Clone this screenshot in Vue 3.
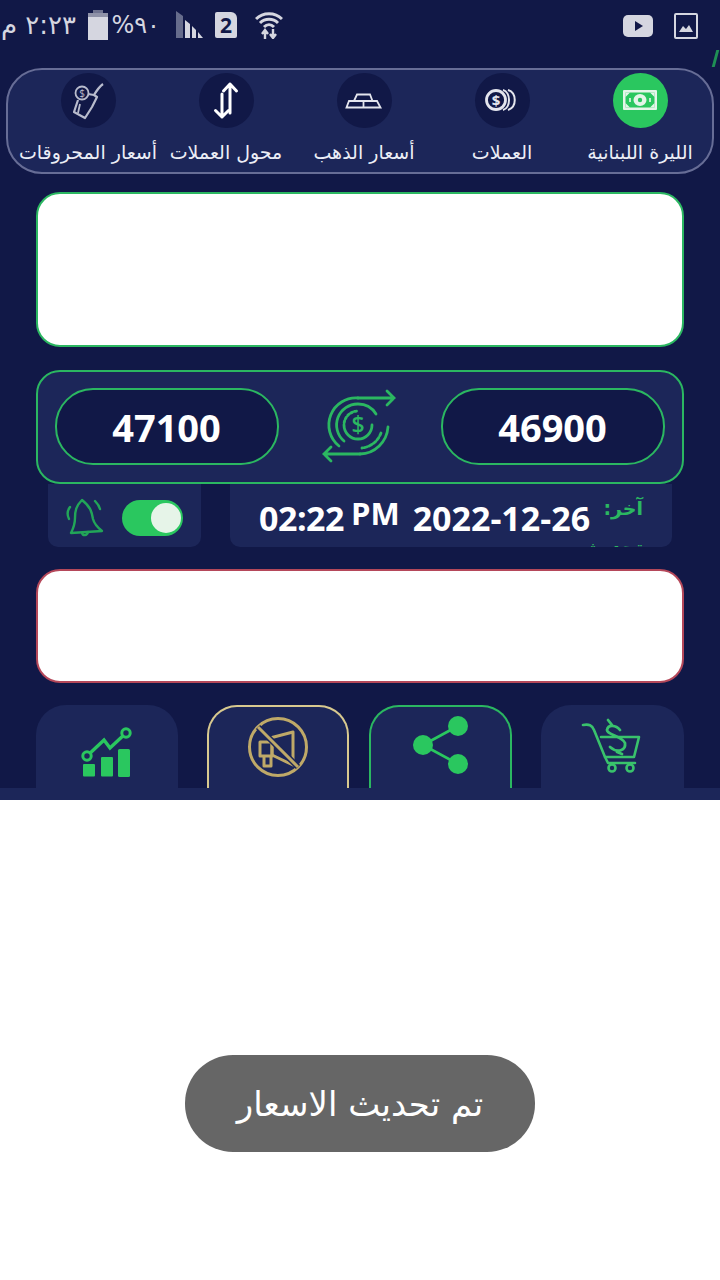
<script setup>
const navItems = [
  { key: 'lira', label: 'الليرة اللبنانية', active: true },
  { key: 'coins', label: 'العملات' },
  { key: 'gold', label: 'أسعار الذهب' },
  { key: 'convert', label: 'محول العملات' },
  { key: 'fuel', label: 'أسعار المحروقات' },
]
</script>

<template>
  <div class="screen">
    <div class="app">
      <header class="status">
        <div class="statusLeft">
          <span class="clock" dir="rtl">٢:٢٣ م</span>
          <svg class="battery" width="20" height="30" viewBox="0 0 20 30">
            <rect x="5" y="0" width="10" height="3" fill="#6f7390" />
            <rect x="0" y="3" width="20" height="4" fill="#8f92a8" />
            <rect x="0" y="7" width="20" height="23" fill="#d5d6e0" />
          </svg>
          <span class="percent" dir="rtl">٩٠%</span>
          <svg class="signal" width="28" height="28" viewBox="0 0 28 28">
            <path d="M0 0 L7 5 V27 H0Z" fill="#666c8c" />
            <path d="M9 9 L14 13 V27 H9Z" fill="#d5d6e0" />
            <path d="M16 15 L20 19 V27 H16Z" fill="#d5d6e0" />
            <path d="M22 21 L27 27 H22Z" fill="#d5d6e0" />
          </svg>
          <div class="sim">2</div>
          <svg class="wifi" width="28" height="28" viewBox="0 0 28 28" fill="none" stroke="#d5d6e0" stroke-width="3">
            <path d="M1 8 C8 1 20 1 27 8" />
            <path d="M5 12 C10 7 18 7 23 12" />
            <path d="M9 16 C12 13 16 13 19 16" />
            <path d="M10 28 V20 M7 23 L10 19 L13 23 M18 18 V26 M15 23 L18 27 L21 23" stroke-width="2.4" />
          </svg>
        </div>
        <div class="statusRight">
          <svg width="30" height="22" viewBox="0 0 30 22">
            <rect width="30" height="22" rx="5" fill="#d5d6e0" />
            <path d="M12 6 L20 11 L12 16Z" fill="#111847" />
          </svg>
          <svg width="24" height="26" viewBox="0 0 24 26">
            <rect x="1" y="1" width="22" height="24" rx="1" fill="none" stroke="#d5d6e0" stroke-width="2" />
            <path d="M5 19 L9 13 L12 16 L15 12 L19 19Z" fill="#d5d6e0" />
          </svg>
        </div>
        <i class="slash"></i>
      </header>

      <nav class="nav" dir="rtl">
        <div v-for="item in navItems" :key="item.key" class="navItem">
          <div class="navCircle" :class="{ active: item.active }">
            <svg v-if="item.key === 'lira'" width="34" height="20" viewBox="0 0 34 20">
              <rect width="34" height="20" rx="1" fill="#e4f5e9" />
              <rect x="2.5" y="2.5" width="29" height="15" fill="#2ac75f" />
              <ellipse cx="17" cy="10" rx="6.5" ry="6" fill="#e4f5e9" />
              <circle cx="17" cy="10" r="2.2" fill="#2ac75f" />
              <path d="M2.5 2.5 H7 L2.5 7Z M31.5 2.5 H27 L31.5 7Z M2.5 17.5 H7 L2.5 13Z M31.5 17.5 H27 L31.5 13Z" fill="#e4f5e9" />
              <path d="M7 8 V12 M27 8 V12" stroke="#e4f5e9" stroke-width="1.6" />
            </svg>
            <svg v-else-if="item.key === 'coins'" width="34" height="24" viewBox="0 0 34 24" fill="none" stroke="#e4e5ee" stroke-width="2">
              <circle cx="11" cy="12" r="9.5" stroke-width="2.8" />
              <path d="M18 2 C26 4 26 20 18 22" />
              <path d="M23 2 C32 5 32 19 23 22" />
              <text x="11" y="17.5" text-anchor="middle" class="coinText">$</text>
            </svg>
            <svg v-else-if="item.key === 'gold'" width="40" height="20" viewBox="345 90 40 20" fill="none" stroke="#e4e5ee" stroke-width="1.8">
              <path d="M355 101 L358 94.5 H371 L373.5 101" />
              <path d="M347.5 107.5 L350 101 H378 L381.5 107.5Z" />
              <path d="M364.5 101 V107.5" />
            </svg>
            <svg v-else-if="item.key === 'convert'" width="40" height="40" viewBox="206 80 40 40" fill="none" stroke="#fff" stroke-width="3" stroke-linecap="round" stroke-linejoin="round">
              <path d="M230 113 V84 M223.5 91 L230 84 L236.5 91" />
              <path d="M222 94 V117 M215.5 110.5 L222 117 L228.5 110.5" />
            </svg>
            <svg v-else width="50" height="50" viewBox="61 75 50 50" fill="none" stroke="#b9bccd" stroke-width="1.8" stroke-linejoin="round">
              <circle cx="80" cy="93" r="6.5" />
              <path d="M76 100 L72 112 L83 118 L90 107 L95 97 L92 95 C95 90 97 87 101 84" stroke-width="2.2" />
              <path d="M86 94 L92 95 M78 104 L76 113" />
              <text x="80" y="96.5" text-anchor="middle" class="fuelText">$</text>
            </svg>
          </div>
          <span class="navLabel">{{ item.label }}</span>
        </div>
      </nav>

      <main class="content">
        <div class="adCard green"></div>

        <section class="priceCard">
          <div class="pill">46900</div>
          <svg class="exchange" width="80" height="80" viewBox="320 386 80 80" fill="none" stroke="#2bb761" stroke-width="2.8" stroke-linecap="round">
            <path d="M358 398 H394 M387 391 L394 398 L387 405" />
            <path d="M360 454 H324 M331 447 L324 454 L331 461" />
            <circle cx="358" cy="425" r="14" stroke-dasharray="44 2 2 2 2 2 2 2 2 2 2" />
            <path d="M344 441 A21 21 0 0 1 358 404 A21 21 0 0 1 376 414" />
            <path d="M339 446 A27 27 0 0 1 358 398" />
            <path d="M388 427 A29 29 0 0 1 360 454" />
            <path d="M381 433 A23 23 0 0 1 362 448" stroke-dasharray="3 2" />
            <text x="358" y="433" text-anchor="middle" class="exchangeText">$</text>
          </svg>
          <div class="pill">47100</div>
        </section>

        <section class="infoRow">
          <div class="alertBox">
            <svg width="40" height="40" viewBox="65 497 40 40" fill="none" stroke="#22a558" stroke-width="2.4" stroke-linejoin="round" stroke-linecap="round">
              <path d="M82 499 C76 505 75 510 75 517 C75 523 73 528 71 532 L102 530 C97 526 94 522 93 518 C92 512 91 506 82 499Z" />
              <path d="M82 532 C83 535 87 535 88 531" />
              <path d="M70 506 C67 510 67 514 69 518 M95 500 C97 502 99 504 100 508" />
            </svg>
            <div class="toggle"><span class="knob"></span></div>
          </div>
          <div class="updatedBox">
            <span class="time">02:22</span>
            <span class="ampm">PM</span>
            <span class="date">2022-12-26</span>
            <span class="updatedLabel" dir="rtl">آخر: تحديث</span>
          </div>
        </section>

        <div class="adCard red"></div>
      </main>

      <div class="tabs">
        <div class="tab chartTab">
          <svg width="58" height="56" viewBox="78 725 58 56" fill="#2ac75f">
            <rect x="83" y="764" width="12" height="12.5" rx="1" />
            <rect x="101" y="757" width="12" height="19.5" rx="1" />
            <rect x="118" y="749" width="12" height="28" rx="1.5" />
            <path d="M87 756 L104 740 L110 748 L126 733" fill="none" stroke="#2ac75f" stroke-width="3.4" />
            <circle cx="87" cy="756" r="4.2" fill="#1c2659" stroke="#2ac75f" stroke-width="3" />
            <circle cx="126" cy="733" r="4.2" fill="#1c2659" stroke="#2ac75f" stroke-width="3" />
          </svg>
        </div>
        <div class="tab gold">
          <svg width="62" height="62" viewBox="247 716 62 62" fill="none" stroke="#bfa968" stroke-width="3" stroke-linejoin="round">
            <circle cx="278" cy="747" r="28.5" />
            <path d="M272 737.5 L293 732 V765 L272 755Z" />
            <path d="M260 742 H272 V756 H260Z" />
            <path d="M264 756 V766 H271 V756" />
            <path d="M258 727 L298 767" stroke="#1c2659" stroke-width="6" />
            <path d="M258 727 L298 767" />
          </svg>
        </div>
        <div class="tab greenTab">
          <svg width="60" height="66" viewBox="410 712 60 66" fill="#2ac75f">
            <path d="M422 745 L457 726 M422 745 L457 764" fill="none" stroke="#2ac75f" stroke-width="2.6" />
            <circle cx="422" cy="745" r="10" />
            <circle cx="457" cy="726" r="10" />
            <circle cx="457" cy="764" r="10" />
          </svg>
        </div>
        <div class="tab cartTab">
          <svg width="65" height="60" viewBox="580 716 65 60" fill="none" stroke="#39c26c" stroke-width="2.6" stroke-linejoin="round" stroke-linecap="round">
            <path d="M583 725 C589 724 592 725 594 730 L605 757 L608 763 H635" />
            <path d="M601 737 H639 L634 757 H605" />
            <circle cx="612" cy="768" r="3.5" />
            <circle cx="630" cy="768" r="3.5" />
            <path d="M620 730 C616 725 608 724 607 730 C607 735 622 736 625 743 C626 750 618 754 610 747 M608 720 L612 725 M617 752 L622 754" stroke-width="2.8" />
          </svg>
        </div>
      </div>
      <div class="tabBase"></div>
    </div>

    <div class="toast" dir="rtl">تم تحديث الاسعار</div>
  </div>
</template>

<style scoped>
.screen {
  width: 720px;
  height: 1280px;
  background: #fff;
  overflow: hidden;
  font-family: "Open Sans", "DejaVu Sans", sans-serif;
}

.app {
  height: 800px;
  background: #111847;
  display: flex;
  flex-direction: column;
}

.status {
  position: relative;
  height: 52px;
  padding: 10px 22px 0 3px;
  box-sizing: border-box;
  margin-bottom: 16px;
  display: flex;
  justify-content: space-between;
  align-items: flex-start;
  color: #d5d6e0;
}

.statusLeft {
  display: flex;
  align-items: center;
  height: 30px;
}

.statusRight {
  display: flex;
  align-items: center;
  gap: 21px;
  height: 30px;
  margin-top: 1px;
}

.clock {
  width: 73px;
  font-size: 26px;
  font-family: "DejaVu Sans", sans-serif;
  margin-right: 12px;
  white-space: nowrap;
}

.percent {
  font-size: 24px;
  margin: 0 16px 0 7px;
  width: 45px;
  white-space: nowrap;
  font-family: "DejaVu Sans", sans-serif;
}

.sim {
  width: 22px;
  height: 26px;
  margin: 0 18px 0 11px;
  background: #d5d6e0;
  border-radius: 2px 6px 2px 2px;
  color: #111847;
  font-size: 21px;
  font-weight: 700;
  line-height: 26px;
  text-align: center;
}

.slash {
  position: absolute;
  left: 714px;
  top: 50px;
  width: 3px;
  height: 17px;
  background: #1f8f55;
  transform: skewX(-15deg);
}

.nav {
  margin: 0 6px;
  height: 107px;
  box-sizing: border-box;
  border: 2px solid #676d96;
  border-radius: 36px;
  background: #1c2659;
  display: flex;
  justify-content: flex-start;
  padding: 3px 3px 0 0;
}

.navItem {
  width: 138px;
  flex: none;
  display: flex;
  flex-direction: column;
  align-items: center;
  gap: 10px;
}

.navCircle {
  width: 55px;
  height: 55px;
  flex: none;
  border-radius: 50%;
  background: #111847;
  display: flex;
  align-items: center;
  justify-content: center;
}

.navCircle.active {
  background: #2ac75f;
}

.navLabel {
  color: #eceef6;
  font-family: "DejaVu Sans", sans-serif;
  font-size: 19px;
  line-height: 28px;
  white-space: nowrap;
}

.coinText {
  font-family: "Open Sans", sans-serif;
  font-size: 15px;
  font-weight: 700;
  fill: #e4e5ee;
  stroke: none;
}

.fuelText {
  font-family: "Open Sans", sans-serif;
  font-size: 10px;
  fill: #b9bccd;
  stroke: none;
}

.exchangeText {
  font-family: "Open Sans", sans-serif;
  font-size: 23px;
  font-weight: 600;
  fill: #2bb761;
  stroke: none;
}

.content {
  padding: 18px 36px 0;
  display: flex;
  flex-direction: column;
}

.adCard {
  background: #fff;
  border-radius: 24px;
  box-sizing: border-box;
}

.adCard.green {
  height: 155px;
  border: 2px solid #2bb761;
  margin-bottom: 23px;
}

.adCard.red {
  height: 114px;
  border: 2px solid #b5485a;
  margin-top: 22px;
}

.priceCard {
  height: 114px;
  box-sizing: border-box;
  border: 2px solid #2bb761;
  border-radius: 24px;
  background: #1c2659;
  display: flex;
  align-items: center;
  justify-content: space-between;
  padding: 0 17px 2px;
  flex-direction: row-reverse;
}

.pill {
  width: 224px;
  height: 77px;
  box-sizing: border-box;
  border: 2px solid #2bb761;
  border-radius: 38px;
  background: #111847;
  color: #fff;
  font-size: 38px;
  font-weight: 700;
  padding: 2px 1px 0 0;
  display: flex;
  align-items: center;
  justify-content: center;
}

.infoRow {
  margin: 0 12px;
  height: 63px;
  display: flex;
  justify-content: space-between;
}

.alertBox {
  width: 153px;
  background: #1c2659;
  border-radius: 0 0 10px 10px;
  display: flex;
  align-items: center;
  padding: 4px 0 0 17px;
  gap: 17px;
  box-sizing: border-box;
}

.toggle {
  width: 61px;
  height: 36px;
  border-radius: 18px;
  background: #2ac75f;
  position: relative;
}

.knob {
  position: absolute;
  right: 2px;
  top: 3px;
  width: 30px;
  height: 30px;
  border-radius: 50%;
  background: #e6f4e8;
}

.updatedBox {
  width: 442px;
  background: #1c2659;
  border-radius: 0 0 10px 10px;
  display: flex;
  align-items: flex-start;
  padding: 10px 30px 0 29px;
  box-sizing: border-box;
  color: #fff;
  font-weight: 700;
  overflow: hidden;
}

.time,
.date {
  font-size: 34px;
  line-height: 48px;
  white-space: nowrap;
}

.time {
  letter-spacing: -0.5px;
}

.ampm {
  font-size: 31px;
  line-height: 42px;
  margin: -2px 13px 0 7px;
  white-space: nowrap;
}

.updatedLabel {
  width: 40px;
  margin: -5px 0 0 13px;
  color: #2bb761;
  font-family: "DejaVu Sans", sans-serif;
  font-size: 19px;
  font-weight: 700;
  line-height: 39px;
}

.tabs {
  margin-top: 22px;
  padding: 0 36px;
  display: flex;
  gap: 29px;
  height: 83px;
}

.tab {
  width: 142px;
  box-sizing: border-box;
  background: #1c2659;
  border-radius: 30px 30px 0 0;
  display: flex;
  align-items: flex-start;
  justify-content: center;
  overflow: hidden;
}

.chartTab {
  padding-top: 20px;
}

.tab.gold {
  border: 2px solid #d8c98f;
  border-bottom: none;
  padding-top: 9px;
}

.tab.greenTab {
  width: 143px;
  margin-left: -9px;
  border: 2px solid #2bb761;
  border-bottom: none;
  padding-top: 5px;
}

.cartTab {
  width: 143px;
  padding-top: 11px;
}

.tabBase {
  height: 12px;
  background: #1c2659;
}

.toast {
  width: 350px;
  height: 97px;
  margin: 255px auto 0;
  border-radius: 48px;
  background: #666;
  color: #fff;
  font-family: "DejaVu Sans", sans-serif;
  font-size: 34px;
  display: flex;
  align-items: center;
  justify-content: center;
}
</style>
